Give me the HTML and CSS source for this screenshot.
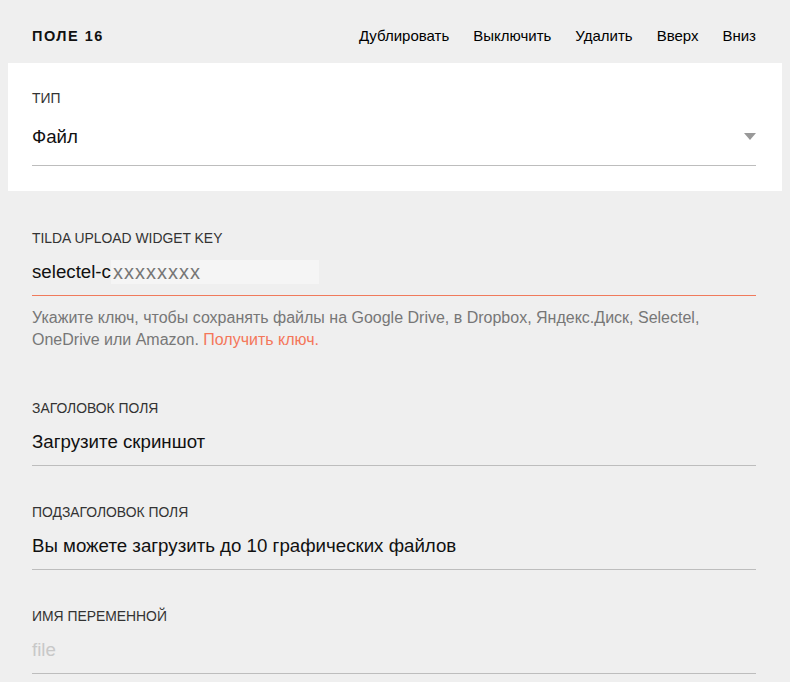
FILE: index.html
```html
<!DOCTYPE html>
<html lang="ru">
<head>
<meta charset="utf-8">
<link rel="stylesheet" href="styles.css">
</head>
<body>
<div class="page">
  <header class="head">
    <div class="title">ПОЛЕ 16</div>
    <nav class="actions">
      <a>Дублировать</a>
      <a>Выключить</a>
      <a>Удалить</a>
      <a>Вверх</a>
      <a>Вниз</a>
    </nav>
  </header>

  <section class="panel">
    <div class="field">
      <div class="label">ТИП</div>
      <div class="value select">
        <span>Файл</span>
        <svg class="caret" width="12" height="7" viewBox="0 0 12 7"><path d="M0 0h12L6 7z" fill="#999"/></svg>
      </div>
      <div class="rule"></div>
    </div>
  </section>

  <div class="fields">
    <div class="field key">
      <div class="label">TILDA UPLOAD WIDGET KEY</div>
      <div class="value"><span>selectel-c</span><span class="redact">xxxxxxxx</span></div>
      <div class="rule-accent"></div>
      <p class="help">Укажите ключ, чтобы сохранять файлы на Google Drive, в Dropbox, Яндекс.Диск, Selectel, OneDrive или Amazon. <span class="link">Получить ключ.</span></p>
    </div>
    <div class="field">
      <div class="label">ЗАГОЛОВОК ПОЛЯ</div>
      <div class="value">Загрузите скриншот</div>
      <div class="rule"></div>
    </div>
    <div class="field">
      <div class="label">ПОДЗАГОЛОВОК ПОЛЯ</div>
      <div class="value">Вы можете загрузить до 10 графических файлов</div>
      <div class="rule"></div>
    </div>
    <div class="field">
      <div class="label">ИМЯ ПЕРЕМЕННОЙ</div>
      <div class="value placeholder">file</div>
      <div class="rule"></div>
    </div>
  </div>
</div>
</body>
</html>
```

FILE: styles.css
```css
* { box-sizing: border-box; }
html, body {
  margin: 0;
  padding: 0;
  background: #efefef;
  font-family: "Liberation Sans", Arial, sans-serif;
  color: #000;
  overflow: hidden;
}
.page {
  width: 790px;
  height: 682px;
  padding: 0 8px;
}
.head {
  display: flex;
  align-items: center;
  justify-content: space-between;
  height: 63px;
  padding: 8px 26px 0 24px;
}
.title {
  font-weight: bold;
  font-size: 14.5px;
  letter-spacing: 1.5px;
  color: #111;
}
.actions {
  display: flex;
  gap: 24px;
  font-size: 15px;
}
.actions a { color: #000; }
.panel {
  background: #fff;
  height: 128px;
  padding: 27px 26px 0 24px;
}
.label {
  font-size: 13.9px;
  color: #333;
  line-height: 16px;
  height: 16px;
}
.value {
  margin-top: 12px;
  height: 37px;
  font-size: 18.7px;
  line-height: 24px;
  color: #111;
  padding-top: 2px;
  white-space: nowrap;
}
.rule {
  height: 1px;
  background: #bdbdbd;
}
.rule-accent {
  height: 1px;
  background: #f07a5c;
}
.select {
  margin-top: 17px;
  height: 42px;
  display: flex;
  justify-content: space-between;
  align-items: flex-start;
}
.caret { margin-top: 8px; }
.fields {
  padding: 39px 26px 0 24px;
  display: flex;
  flex-direction: column;
  gap: 38px;
}
.redact {
  display: inline-block;
  background: #f5f5f5;
  width: 208px;
  color: #777;
  font-size: 20px;
  letter-spacing: 1px;
  padding-left: 2px;
  vertical-align: top;
}
.help {
  margin: 11px 0 0 0;
  font-size: 16px;
  line-height: 22px;
  color: #777;
}
.key { margin-bottom: 11px; }
.link { color: #f4775a; }
.placeholder { color: #c8c8c8; }
```
